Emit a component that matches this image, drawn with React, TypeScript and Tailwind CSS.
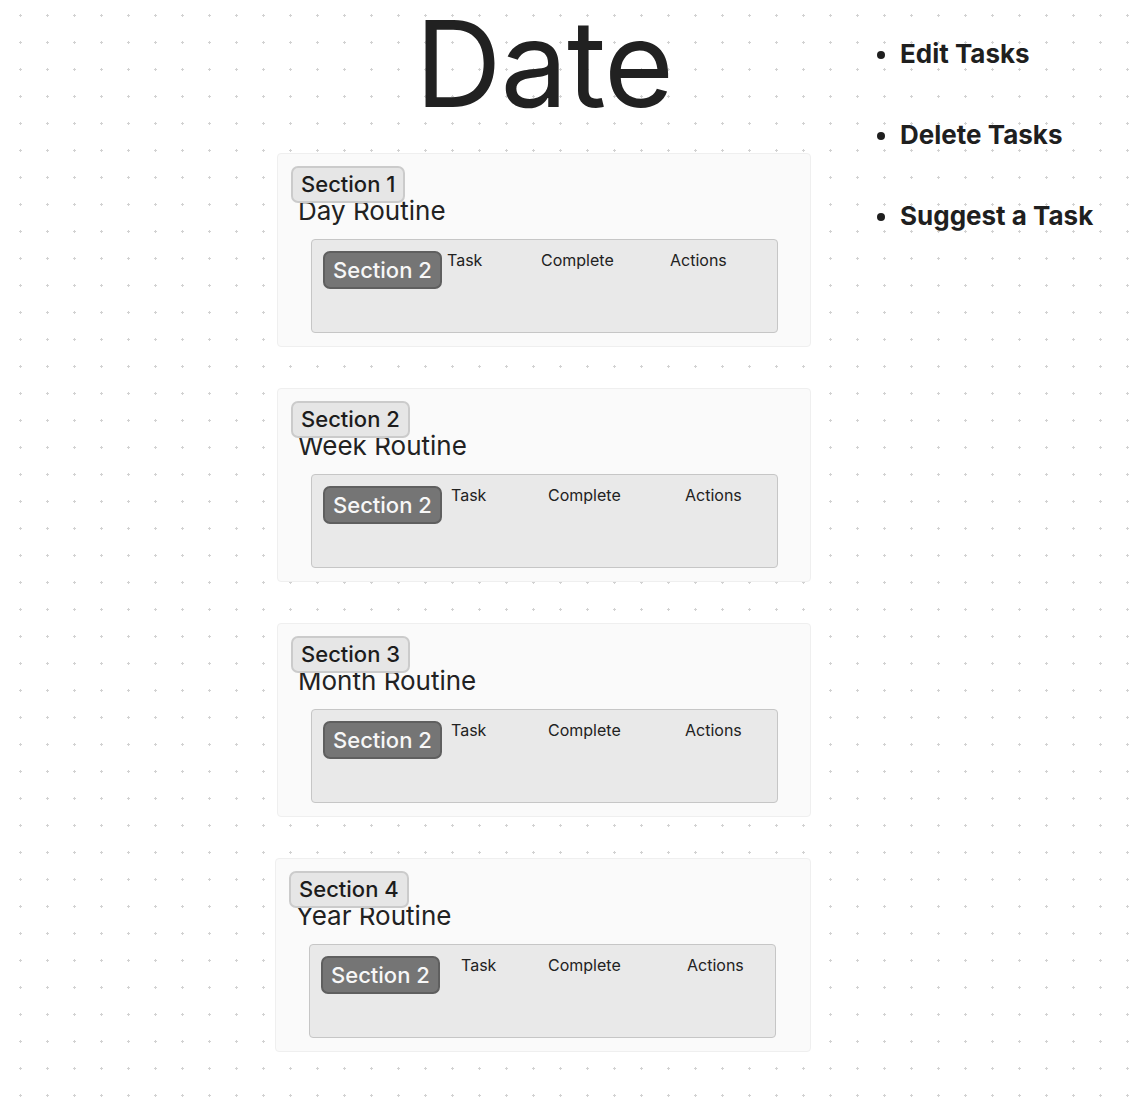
type Routine = {
  label: string;
  title: string;
  shift: string;
  firstCol: string;
  taskWidth: string;
  completeWidth: string;
};

const routines: Routine[] = [
  {
    label: "Section 1",
    title: "Day Routine",
    shift: "",
    firstCol: "w-[124px]",
    taskWidth: "w-[94px]",
    completeWidth: "w-[129px]",
  },
  {
    label: "Section 2",
    title: "Week Routine",
    shift: "",
    firstCol: "w-[128px]",
    taskWidth: "w-[97px]",
    completeWidth: "w-[137px]",
  },
  {
    label: "Section 3",
    title: "Month Routine",
    shift: "",
    firstCol: "w-[128px]",
    taskWidth: "w-[97px]",
    completeWidth: "w-[137px]",
  },
  {
    label: "Section 4",
    title: "Year Routine",
    shift: "-ml-[2px]",
    firstCol: "w-[140px]",
    taskWidth: "w-[87px]",
    completeWidth: "w-[139px]",
  },
];

const menu = ["Edit Tasks", "Delete Tasks", "Suggest a Task"];

const RoutineCard = ({ routine }: { routine: Routine }) => (
  <section
    className={`flex flex-col rounded-[4px] border border-[#efefef] bg-[#fafafa] px-[13px] pt-[12px] pb-[13px] ${routine.shift}`}
  >
    {/* section tag sits over the title */}
    <div className="relative z-10 flex h-[37px] items-center self-start rounded-[7px] border-2 border-[#cbcbcb] bg-[#e6e6e6] px-[8px] text-[22px] font-medium text-[#1c1c1c]">
      {routine.label}
    </div>
    <h2 className="-mt-[8px] ml-[7px] text-[26px] leading-8 text-[#222]">
      {routine.title}
    </h2>

    <div className="mt-[12px] ml-[20px] flex h-[94px] w-[467px] shrink-0 items-start rounded-[4px] border border-[#c6c6c6] bg-[#e9e9e9] p-[11px]">
      <div className={`${routine.firstCol} shrink-0`}>
        <div className="flex h-[38px] w-fit items-center rounded-[7px] border-2 border-[#5f5f5f] bg-[#757575] px-[8px] text-[22px] font-medium text-[#f7f7f7]">
          Section 2
        </div>
      </div>
      <div className={`${routine.taskWidth} shrink-0 text-[16px] leading-[18px] text-[#222]`}>
        Task
      </div>
      <div className={`${routine.completeWidth} shrink-0 text-[16px] leading-[18px] text-[#222]`}>
        Complete
      </div>
      <div className="text-[16px] leading-[18px] text-[#222]">Actions</div>
    </div>
  </section>
);

const App = () => {
  return (
    <div className="min-h-screen w-full bg-white font-['Inter','Noto_Sans',sans-serif] text-[#212121] [background-image:radial-gradient(circle,#d2d2d2_1px,transparent_1.2px)] [background-position:7px_2px] [background-size:27px_27px]">
      <div className="flex">
        <div className="w-[277px] shrink-0" />

        <main className="w-[534px] shrink-0 pb-[60px]">
          <h1 className="pt-[3px] text-center text-[120px] leading-[146px] tracking-[-1px] text-[#212121] -mt-[12px]">
            Date
          </h1>
          <div className="mt-[16px] flex flex-col gap-[41px]">
            {routines.map((routine) => (
              <RoutineCard key={routine.label} routine={routine} />
            ))}
          </div>
        </main>

        <aside className="pl-[67px]">
          <ul className="flex list-disc flex-col gap-[43px] pt-[35px] pl-[22px]">
            {menu.map((item) => (
              <li key={item} className="text-[26px] leading-[38px] font-bold text-[#1f1f1f]">
                {item}
              </li>
            ))}
          </ul>
        </aside>
      </div>
    </div>
  );
};

export default App;
